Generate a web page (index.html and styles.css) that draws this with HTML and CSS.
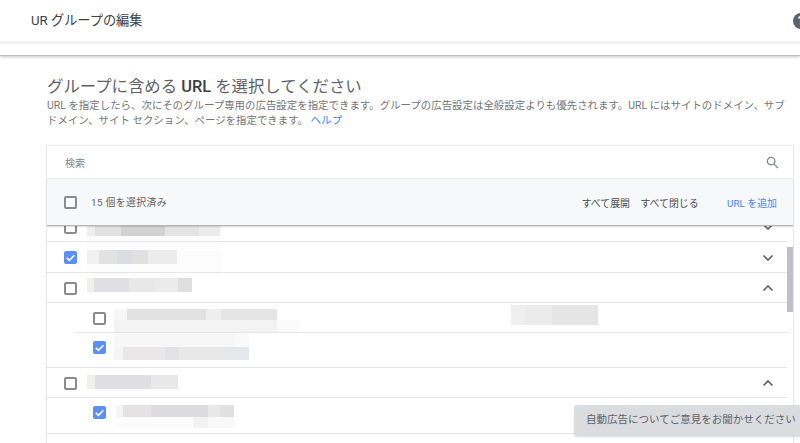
FILE: index.html
```html
<!DOCTYPE html>
<html lang="ja">
<head>
<meta charset="utf-8">
<title>URL グループの編集</title>
<link rel="stylesheet" href="styles.css">
</head>
<body>
<header class="topbar">
  <span class="topbar-title">UR グループの編集</span>
  <span class="help">?</span>
</header>
<div class="subbar"></div>
<main class="main">
  <h1 class="title">グループに含める <b>URL</b> を選択してください</h1>
  <p class="desc">URL を指定したら、次にそのグループ専用の広告設定を指定できます。グループの広告設定は全般設定よりも優先されます。URL にはサイトのドメイン、サブドメイン、サイト セクション、ページを指定できます。 <a class="link">ヘルプ</a></p>
  <section class="card">
    <div class="search">
      <span class="search-label">検索</span>
      <svg class="search-icon" viewBox="0 0 24 24"><circle cx="9.5" cy="9.5" r="7"/><path d="M14.5 14.5L22 22"/></svg>
    </div>
    <div class="toolbar">
      <span class="box box-head"></span>
      <span class="count">15 個を選択済み</span>
      <span class="action act-expand">すべて展開</span>
      <span class="action act-close">すべて閉じる</span>
      <span class="add">URL を追加</span>
    </div>
    <div class="list">
      <div class="row row-clipped">
        <span class="box"></span>
        <svg class="chev" viewBox="0 0 12 8"><path d="M1.5 1.5L6 6l4.5-4.5"/></svg>
        <div class="mosaic m1"></div>
      </div>
      <div class="row row-31">
        <span class="box checked"><svg viewBox="0 0 13 13"><path d="M2.8 6.8l2.6 2.5 5-5"/></svg></span>
        <svg class="chev" viewBox="0 0 12 8"><path d="M1.5 1.5L6 6l4.5-4.5"/></svg>
        <div class="mosaic m2"></div>
      </div>
      <div class="row row-30">
        <span class="box"></span>
        <svg class="chev" viewBox="0 0 12 8"><path d="M1.5 6.5L6 2l4.5 4.5"/></svg>
        <div class="mosaic m3"></div>
      </div>
      <div class="row row-child row-30 line-inner">
        <span class="box"></span>
        <div class="mosaic m4"></div>
        <div class="mosaic m8"></div>
      </div>
      <div class="row row-child row-35">
        <span class="box checked"><svg viewBox="0 0 13 13"><path d="M2.8 6.8l2.6 2.5 5-5"/></svg></span>
        <div class="mosaic m5"></div>
      </div>
      <div class="row row-30">
        <span class="box"></span>
        <svg class="chev" viewBox="0 0 12 8"><path d="M1.5 6.5L6 2l4.5 4.5"/></svg>
        <div class="mosaic m6"></div>
      </div>
      <div class="row row-child row-36">
        <span class="box checked"><svg viewBox="0 0 13 13"><path d="M2.8 6.8l2.6 2.5 5-5"/></svg></span>
        <div class="mosaic m7"></div>
      </div>
      <div class="row row-30">
        <span class="box"></span>
      </div>
      <div class="scrollbar"></div>
    </div>
  </section>
</main>
<div class="toast">自動広告についてご意見をお聞かせください</div>
</body>
</html>
```

FILE: styles.css
```css
* { box-sizing: border-box; }
html, body { margin: 0; padding: 0; height: 443px; overflow: hidden; background: #fff; }
body { font-family: Roboto, "Noto Sans CJK JP", sans-serif; color: #5f6368; position: relative; width: 800px; }

.topbar { height: 42px; display: flex; align-items: center; justify-content: space-between; padding-left: 31px; background: #fff; }
.topbar-title { font-size: 13.2px; color: #3c4043; position: relative; top: -2px; }
.help { width: 16px; height: 16px; border-radius: 50%; background: #5f6368; color: #fff; font-size: 12px; font-weight: 700; line-height: 16px; text-align: center; margin-right: -9px; flex: none; }

.subbar { height: 14px; border-top: 2px solid #efefef; border-bottom: 1px solid #bdbdbd; box-shadow: 0 1px 3px rgba(0,0,0,.22); background: #fff; }

.main { padding: 19px 6px 0 46px; }
.title { margin: 0 0 0 1px; font-size: 16.4px; line-height: 24px; font-weight: 400; color: #5f6368; }
.title b { font-weight: 500; color: #3c4043; }
.desc { margin: -1px 0 0 1px; font-size: 10.45px; line-height: 15px; color: #757575; width: 742px; }
.link { color: #4285f4; }

.card { margin-top: 17px; border: 1px solid #e8e8e8; border-top-color: #f0f0f0; background: #fff; box-shadow: 0 0 2px rgba(0,0,0,.06); }
.search { height: 33px; display: flex; align-items: center; justify-content: space-between; padding: 0 14px 0 18px; border-bottom: 1px solid #e8eaed; }
.search-label { font-size: 10px; color: #80868b; }
.search-icon { width: 13px; height: 13px; fill: none; stroke: #80868b; stroke-width: 2.4; }

.toolbar { height: 47px; display: flex; align-items: center; background: #f7f8fa; border-bottom: 1px solid #b5b5b5; padding-left: 17px; position: relative; z-index: 1; box-shadow: 0 1px 1px rgba(0,0,0,.12); font-size: 9.9px; }
.count { margin-left: 14px; color: #5f6368; letter-spacing: .35px; }
.action { color: #4d4d4d; position: relative; top: 1px; }
.act-expand { margin-left: auto; }
.act-close { margin-left: 10.5px; }
.add { margin-left: 28.5px; margin-right: 16px; color: #4285f4; position: relative; top: 1px; }

.box { display: block; width: 13px; height: 13px; border: 2px solid #8a8a92; border-radius: 2px; flex: none; background: #fff; }
.box svg { display: block; width: 13px; height: 13px; margin: -2px; fill: none; stroke: #fff; stroke-width: 1.6; }
.box.checked { background: #5b8ff5; border-color: #5b8ff5; }

.list { position: relative; height: 218px; overflow: hidden; }
.row { position: relative; display: flex; align-items: center; padding-left: 17px; padding-right: 19px; justify-content: space-between; }
.row::after { content: ""; position: absolute; left: 0; right: 6px; bottom: 0; height: 1px; background: #e6e6e6; }
.row-clipped { height: 30px; margin-top: -14px; }
.row-31 { height: 31px; }
.row-30 { height: 30px; }
.row-35 { height: 35px; padding-bottom: 6px; }
.row-36 { height: 36px; padding-bottom: 7px; }
.row-child { padding-left: 46px; }
.line-inner::after { left: 29px; }
.chev { width: 12px; height: 8px; fill: none; stroke: #5f6368; stroke-width: 1.7; flex: none; }

.mosaic { position: absolute; }
.m1 { left: 40px; top: 0; width: 136px; height: 23px; background:
  linear-gradient(90deg, #eee 0 6%, #e2e2e2 6% 25%, #d2d2d2 25% 57%, #e4e4e4 57% 82%, #ebebeb 82% 98%, transparent 98%) 0 0 / 100% 10px no-repeat,
  #fcfcfc; margin-top: 14px; }
.m2 { left: 40px; top: 8px; width: 135px; height: 26px; background:
  linear-gradient(90deg, #f1f1f1 0 9%, #e2e2e2 9% 22%, #dcdde2 22% 33%, #e0e0e0 33% 45%, #ececec 45% 67%, transparent 67%) 0 0 / 100% 14px no-repeat,
  #fcfcfc; }
.m3 { left: 40px; top: 5px; width: 105px; height: 14px; background: linear-gradient(90deg, #f3efec 0 7%, #e0e0e2 7% 40%, #e8e8e8 40% 65%, #ebebeb 65% 87%, #dedede 87%); }
.m4 { left: 67px; top: 6px; width: 185px; height: 24px; background:
  linear-gradient(90deg, #f7f7f7 0 7%, #e2e2e2 7% 50%, #eeeeee 50% 58%, #e4e4e4 58% 88%, transparent 88%) 0 0 / 100% 11px no-repeat,
  linear-gradient(90deg, #f3f3f3 0 88%, #fbfbfb 88%) 0 11px / 100% 13px no-repeat; }
.m8 { left: 464px; top: 2px; width: 87px; height: 20px; background: linear-gradient(90deg, #efefef 0 16%, #ebebeb 16% 47%, #e5e5e5 47%); }
.m5 { left: 67px; top: 0; width: 135px; height: 27px; background:
  linear-gradient(90deg, #f7f7f7 0 90%, #fafafa 90%) 0 0 / 100% 14px no-repeat,
  linear-gradient(90deg, #f5f5f5 0 7%, #e9e7e7 7% 38%, #e2e3e5 38% 48%, #e9e8e8 48% 80%, #e6e7ea 80%) 0 14px / 100% 13px no-repeat; }
.m6 { left: 40px; top: 7px; width: 91px; height: 14px; background: linear-gradient(90deg, #f3efec 0 9%, #dfdfe2 9% 70%, #e8e8e8 70%); }
.m7 { left: 69px; top: 7px; width: 118px; height: 23px; background:
  linear-gradient(90deg, #f5f5f5 0 6%, #e4e2e2 6% 30%, #dcdcde 30% 78%, #e8e8e8 78% 88%, #e0e0e0 88%) 0 0 / 100% 12px no-repeat,
  linear-gradient(90deg, #fcfcfc 0 65%, #f2f2f2 65% 78%, #f9f9f9 78%) 0 12px / 100% 11px no-repeat; }

.scrollbar { position: absolute; right: 0; top: 21px; width: 6px; height: 65px; background: #bdc1c6; }

.toast { position: absolute; left: 574px; top: 405px; width: 240px; height: 31px; padding-left: 12px; line-height: 30px; background: #dadce0; border-radius: 3px; color: #5f6368; font-size: 10.5px; white-space: nowrap; box-shadow: 0 1px 2px rgba(0,0,0,.15); }
```
